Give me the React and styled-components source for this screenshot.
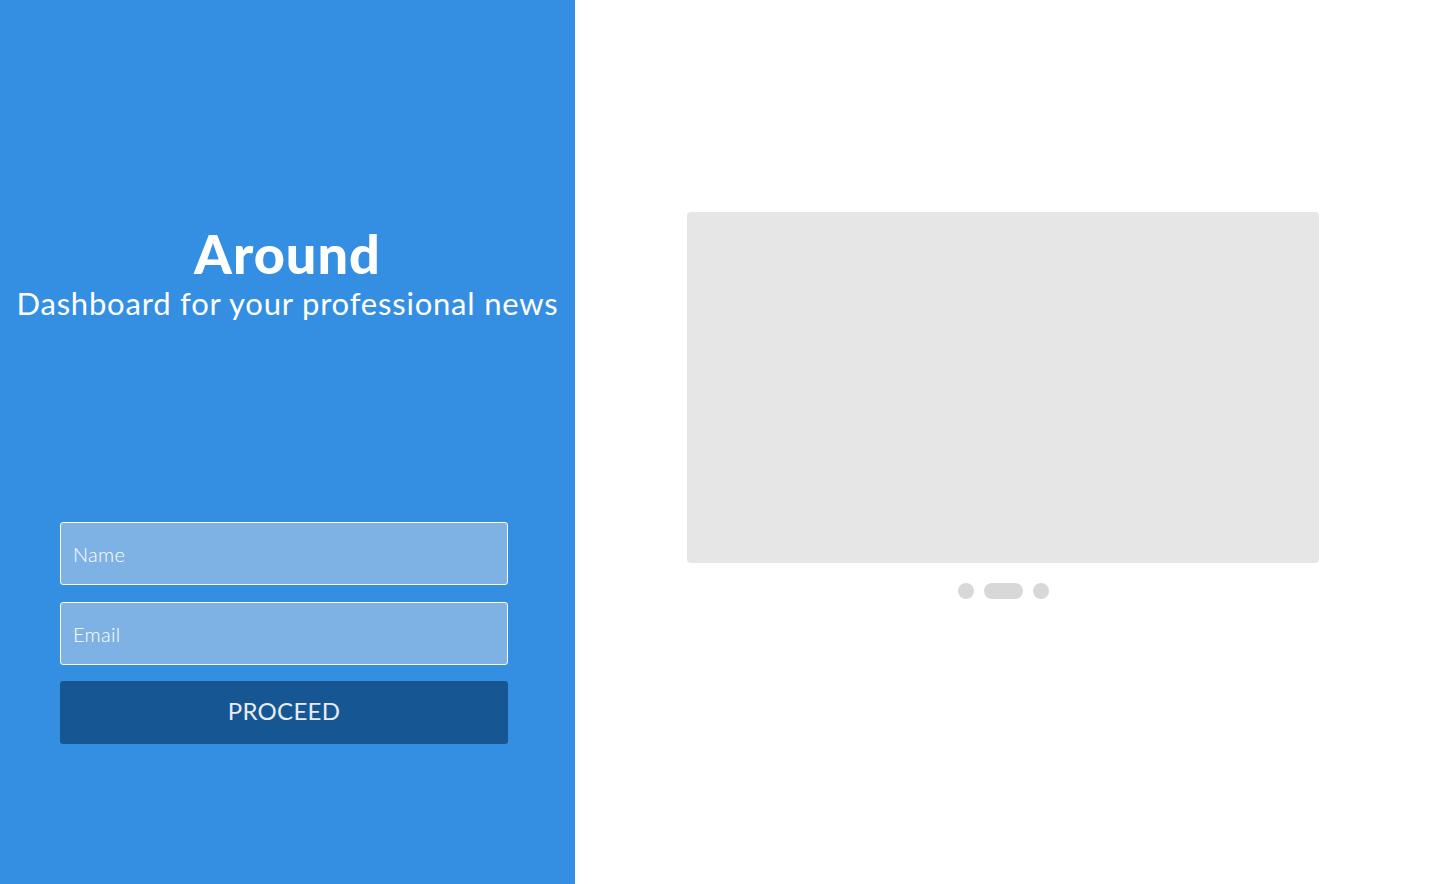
import React from "react";
import styled, { createGlobalStyle } from "styled-components";

const Global = createGlobalStyle`
  html, body { margin: 0; padding: 0; }
  body { font-family: "Lato", "Open Sans", sans-serif; background: #fff; }
  * { box-sizing: border-box; }
`;

const Page = styled.div`
  display: flex;
  width: 1440px;
  height: 884px;
  overflow: hidden;
`;

const Side = styled.aside`
  width: 575px;
  flex-shrink: 0;
  background: #348fe2;
  display: flex;
  flex-direction: column;
  align-items: center;
  padding-top: 222px;
`;

const Title = styled.h1`
  margin: 0;
  font-family: "Lato", sans-serif;
  font-weight: 900;
  font-size: 54px;
  line-height: 64px;
  color: #fff;
  letter-spacing: 1px;
`;

const Subtitle = styled.p`
  margin: 0;
  font-family: "Lato", sans-serif;
  font-weight: 400;
  font-size: 31px;
  line-height: 34px;
  color: #fff;
  letter-spacing: 0.8px;
  white-space: nowrap;
`;

const Form = styled.form`
  margin-top: 202px;
  align-self: flex-start;
  margin-left: 60px;
  width: 448px;
  display: flex;
  flex-direction: column;
  gap: 17px;
`;

const Input = styled.input`
  width: 100%;
  height: 63px;
  border: 1px solid #fff;
  border-radius: 3px;
  background: #7eb2e5;
  padding: 0 12px;
  font-family: "Lato", sans-serif;
  font-weight: 300;
  font-size: 20px;
  letter-spacing: 0.3px;
  color: #fff;
  outline: none;
  &::placeholder { color: #fff; opacity: 1; }
`;

const Button = styled.button`
  width: 100%;
  height: 63px;
  margin-top: -1px;
  border: none;
  border-radius: 3px;
  background: #165793;
  color: #e8ecf0;
  font-family: "Lato", sans-serif;
  font-size: 24px;
  line-height: 24px;
  padding: 0 0 4px;
  letter-spacing: 0.3px;
  cursor: pointer;
`;

const Main = styled.main`
  flex: 1;
  display: flex;
  flex-direction: column;
  padding: 212px 121px 0 112px;
`;

const Slide = styled.div`
  width: 632px;
  height: 351px;
  background: #e6e6e6;
  border-radius: 4px;
`;

const Dots = styled.div`
  display: flex;
  justify-content: center;
  gap: 10px;
  margin-top: 20px;
  width: 632px;
`;

const Dot = styled.span`
  width: ${(p) => (p.$active ? "39px" : "16px")};
  height: 16px;
  border-radius: 8px;
  background: #d8d8d8;
`;

export default function App() {
  return (
    <Page>
      <Global />
      <Side>
        <Title>Around</Title>
        <Subtitle>Dashboard for your professional news</Subtitle>
        <Form onSubmit={(e) => e.preventDefault()}>
          <Input placeholder="Name" />
          <Input placeholder="Email" />
          <Button type="submit">PROCEED</Button>
        </Form>
      </Side>
      <Main>
        <Slide />
        <Dots>
          <Dot />
          <Dot $active />
          <Dot />
        </Dots>
      </Main>
    </Page>
  );
}
